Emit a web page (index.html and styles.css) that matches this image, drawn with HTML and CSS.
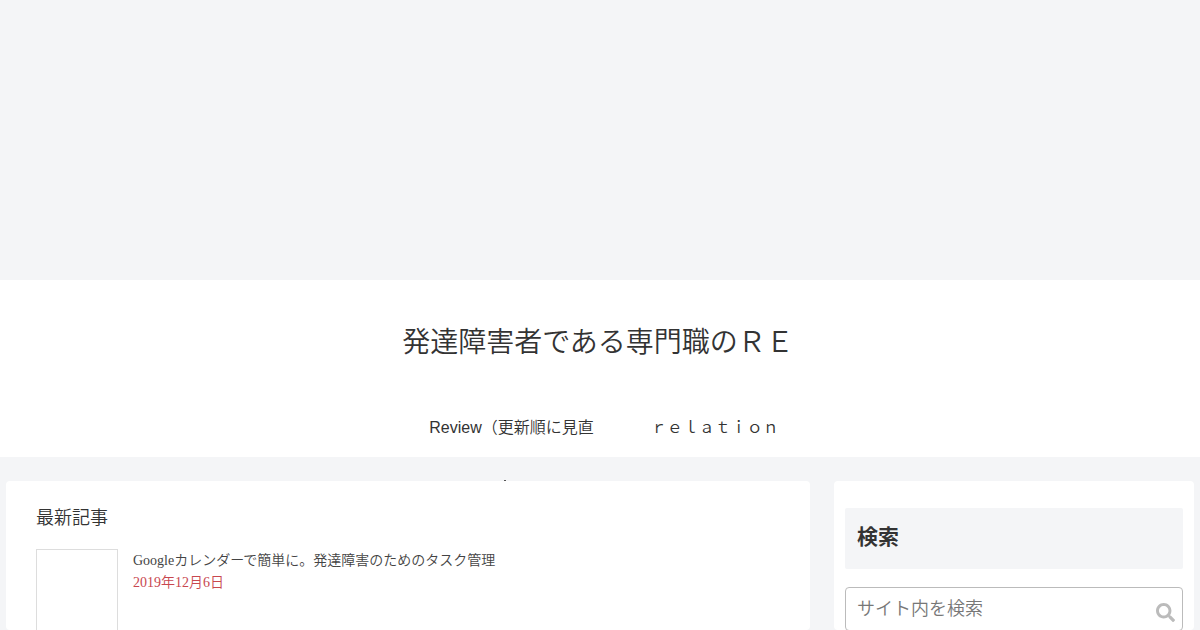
FILE: index.html
```html
<!DOCTYPE html>
<html lang="ja">
<head>
    <meta charset="UTF-8">
    <title>発達障害者である専門職のＲＥ</title>
    <meta name="viewport" content="width=device-width, initial-scale=1.0">
    <link rel="stylesheet" href="styles.css">
</head>
<body>
    <div class="ad-area"></div>
    <header class="site-header">
        <h1 class="site-title">発達障害者である専門職のＲＥ</h1>
        <nav class="navi">
            <a href="#">Review（更新順に見直</a>
            <a href="#">ｒｅｌａｔｉｏｎ</a>
        </nav>
    </header>
    <div class="content">
        <main class="main">
            <span class="speck"></span>
            <h2 class="new-title">最新記事</h2>
            <div class="entry">
                <div class="thumb"></div>
                <div class="entry-body">
                    <a class="entry-title" href="#">Googleカレンダーで簡単に。発達障害のためのタスク管理</a>
                    <div class="entry-date">2019年12月6日</div>
                </div>
            </div>
        </main>
        <aside class="sidebar">
            <h3 class="widget-title">検索</h3>
            <form class="search-form">
                <input class="search-input" type="text" placeholder="サイト内を検索">
                <svg class="search-icon" viewBox="0 0 512 512"><path d="M505 442.700L405.300 343c-4.500-4.500-10.600-7-17-7H372c27.600-35.300 44-79.700 44-128C416 93.100 322.900 0 208 0S0 93.100 0 208s93.100 208 208 208c48.300 0 92.700-16.400 128-44v16.300c0 6.400 2.500 12.500 7 17l99.700 99.700c9.400 9.400 24.600 9.400 33.900 0l28.300-28.300c9.400-9.400 9.400-24.600.1-34zM208 336c-70.700 0-128-57.200-128-128 0-70.700 57.200-128 128-128 70.700 0 128 57.200 128 128 0 70.700-57.200 128-128 128z"/></svg>
            </form>
        </aside>
    </div>
</body>
</html>
```
FILE: styles.css
```css
* {
    box-sizing: border-box;
}

html, body {
    height: 630px;
    overflow: hidden;
}

body {
    margin: 0;
    background: #f4f5f7;
    color: #333;
    font-family: "Liberation Sans", "Noto Sans CJK JP", sans-serif;
}

.ad-area {
    height: 280px;
}

.site-header {
    background: #fff;
    height: 177px;
    text-align: center;
}

.site-title {
    margin: 0;
    padding-top: 45px;
    padding-right: 4px;
    font-size: 28px;
    line-height: 36px;
    font-weight: 350;
}

.navi {
    display: flex;
    justify-content: center;
    gap: 57px;
    margin-top: 55px;
    padding-left: 8px;
    font-size: 16px;
    line-height: 24px;
    font-weight: 350;
}

.navi a {
    color: #333;
    text-decoration: none;
}

.content {
    display: flex;
    gap: 24px;
    padding: 24px 6px 0;
}

.main {
    position: relative;
    width: 804px;
    height: 149px;
    padding: 24px 30px 0;
    background: #fff;
    border-radius: 4px;
}

.speck {
    position: absolute;
    left: 498px;
    top: -1px;
    width: 2px;
    height: 1px;
    background: #555;
}

.new-title {
    margin: 0 0 18px;
    font-family: "Liberation Serif", "Noto Sans CJK JP", serif;
    font-size: 18px;
    line-height: 26px;
    font-weight: 350;
}

.entry {
    display: flex;
    gap: 15px;
    font-family: "Liberation Serif", "Noto Sans CJK JP", serif;
    font-size: 14px;
    line-height: 22px;
    font-weight: 350;
}

.thumb {
    width: 82px;
    height: 81px;
    border: 1px solid #ddd;
    border-bottom: 0;
}

.entry-body {
    padding-top: 1px;
}

.entry-title {
    color: #444;
    text-decoration: none;
}

.entry-date {
    color: #c8474f;
}

.sidebar {
    width: 360px;
    height: 149px;
    padding: 27px 11px 0;
    background: #fff;
    border-radius: 4px;
}

.widget-title {
    margin: 0 0 18px;
    padding: 0 12px 3px;
    background: #f4f5f7;
    border-radius: 2px;
    font-size: 21px;
    line-height: 58px;
    font-weight: 700;
}

.search-form {
    position: relative;
}

.search-input {
    display: block;
    width: 100%;
    height: 44px;
    padding: 0 40px 0 11px;
    border: 1px solid #bbb;
    border-radius: 4px;
    font-family: inherit;
    font-size: 18px;
    font-weight: 350;
}

.search-input::placeholder {
    color: #777;
}

.search-icon {
    position: absolute;
    right: 8px;
    top: 16px;
    width: 19px;
    height: 19px;
    fill: #bbb;
}
```
